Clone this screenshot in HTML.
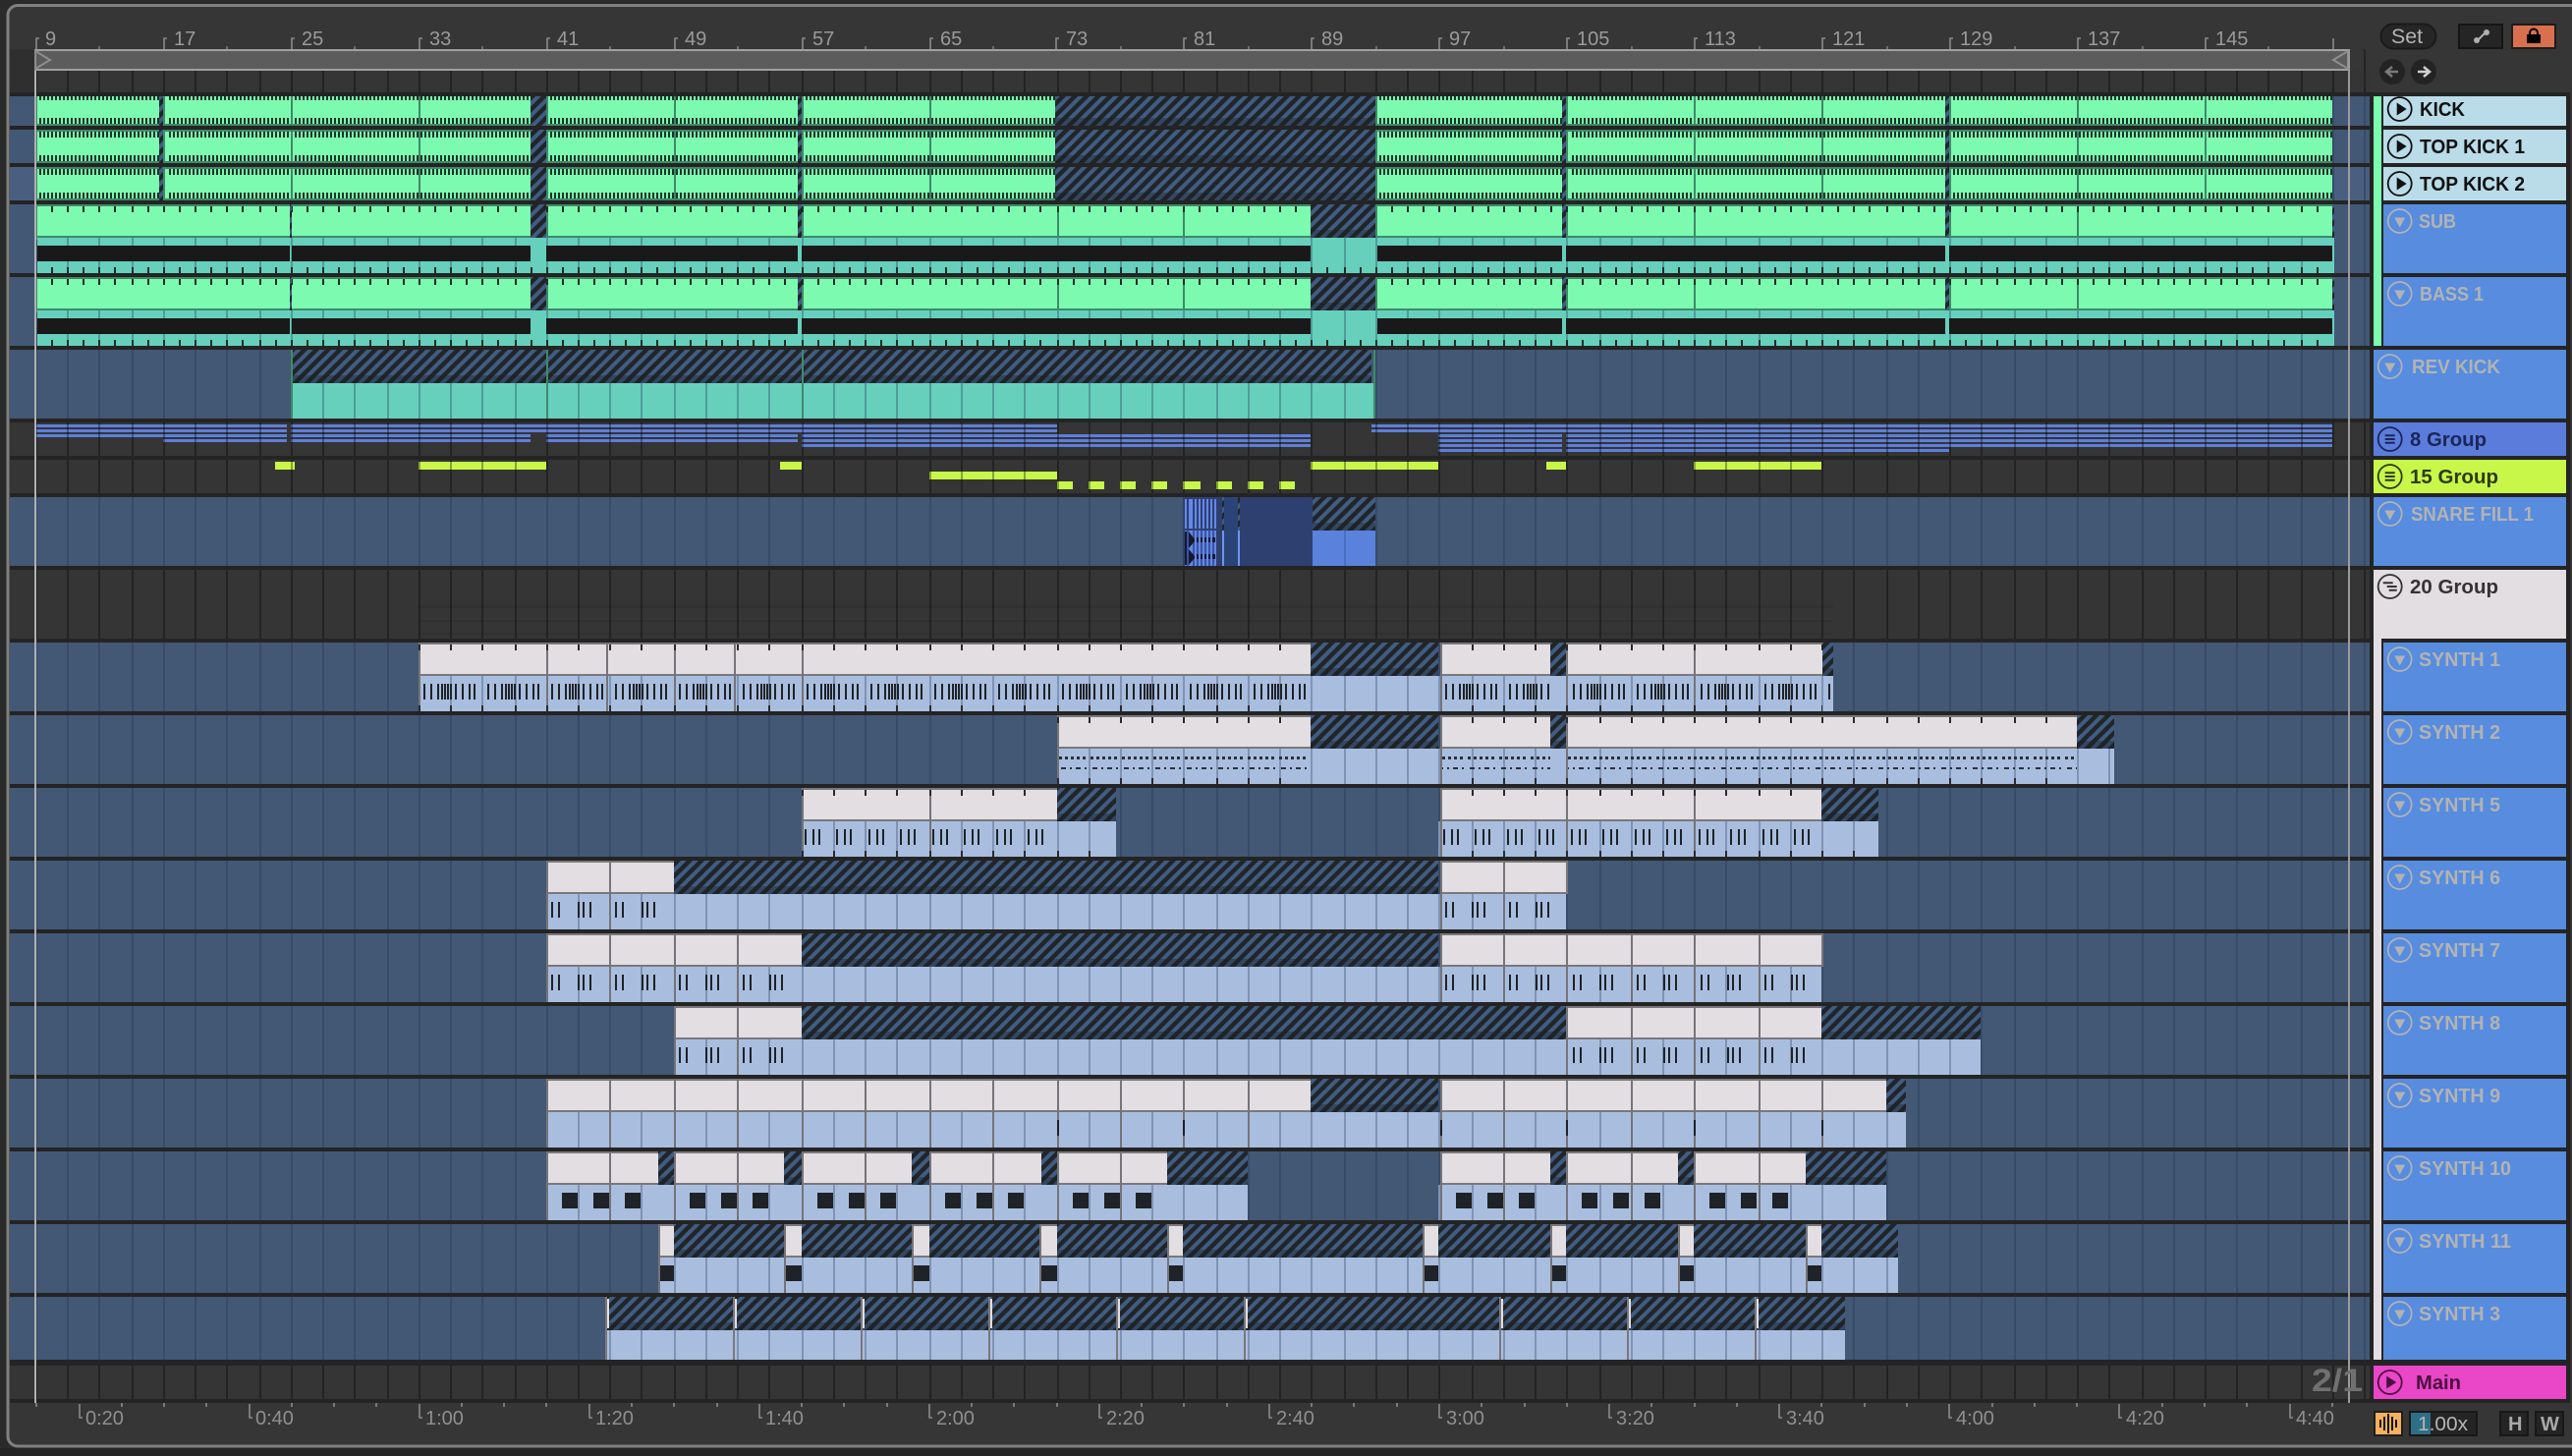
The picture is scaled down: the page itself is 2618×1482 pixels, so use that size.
<!DOCTYPE html>
<html><head><meta charset="utf-8"><title>Arrangement</title>
<style>
html,body{margin:0;padding:0;background:#2a2a2a;width:2618px;height:1482px;overflow:hidden}
svg{display:block}
text{font-family:"Liberation Sans",sans-serif}
.r{font-size:20px;fill:#9a9a9a}
.b{font-size:20px;fill:#8f8f8f}
.l{font-size:20px;font-weight:700}
.o{fill:#b3b3b3}
</style></head><body>
<svg xmlns="http://www.w3.org/2000/svg" width="2618" height="1482" viewBox="0 0 2618 1482">
<defs>
<pattern id="h" width="12" height="12" patternUnits="userSpaceOnUse"><rect width="12" height="12" fill="#20252a"/><path d="M-3 3L3 -3M0 12L12 0M9 15L15 9" stroke="#415c80" stroke-width="4"/></pattern>
<pattern id="p4" width="4" height="10" patternUnits="userSpaceOnUse"><rect width="2" height="10" fill="#1a3328"/></pattern>
<pattern id="n1" x="426" width="65" height="100" patternUnits="userSpaceOnUse"><path fill="#1f2226" d="M5 0h2v100h-2zM12 0h2v100h-2zM19 0h2v100h-2zM23 0h2v100h-2zM26 0h2v100h-2zM29 0h2v100h-2zM32 0h2v100h-2zM37 0h2v100h-2zM44 0h2v100h-2zM51 0h2v100h-2zM56 0h2v100h-2z"/></pattern>
<pattern id="n5" x="816" width="65" height="100" patternUnits="userSpaceOnUse"><path fill="#1f2226" d="M3 0h2v100h-2zM11 0h2v100h-2zM17 0h2v100h-2zM35 0h2v100h-2zM43 0h2v100h-2zM49 0h2v100h-2z"/></pattern>
<pattern id="n6" x="556" width="65" height="100" patternUnits="userSpaceOnUse"><path fill="#1f2226" d="M5 0h2v100h-2zM12 0h2v100h-2zM32 0h2v100h-2zM37 0h2v100h-2zM44 0h2v100h-2z"/></pattern>
<pattern id="n2" x="1076" y="770" width="32" height="16" patternUnits="userSpaceOnUse"><path fill="#2a3038" d="M2 0h3v3h-3zM8 0h3v3h-3zM14 0h3v3h-3zM20 0h3v3h-3zM26 0h3v3h-3zM4 11h5v2h-5zM13 11h2v2h-2zM19 11h5v2h-5zM28 11h2v2h-2z"/></pattern>

<path id="grid" d="M37 0V1482M69 0V1482M101 0V1482M135 0V1482M167 0V1482M199 0V1482M231 0V1482M265 0V1482M297 0V1482M329 0V1482M361 0V1482M395 0V1482M427 0V1482M459 0V1482M491 0V1482M525 0V1482M557 0V1482M589 0V1482M621 0V1482M653 0V1482M687 0V1482M719 0V1482M751 0V1482M783 0V1482M817 0V1482M849 0V1482M881 0V1482M913 0V1482M947 0V1482M979 0V1482M1011 0V1482M1043 0V1482M1077 0V1482M1109 0V1482M1141 0V1482M1173 0V1482M1205 0V1482M1239 0V1482M1271 0V1482M1303 0V1482M1335 0V1482M1369 0V1482M1401 0V1482M1433 0V1482M1465 0V1482M1499 0V1482M1531 0V1482M1563 0V1482M1595 0V1482M1629 0V1482M1661 0V1482M1693 0V1482M1725 0V1482M1757 0V1482M1791 0V1482M1823 0V1482M1855 0V1482M1887 0V1482M1921 0V1482M1953 0V1482M1985 0V1482M2017 0V1482M2051 0V1482M2083 0V1482M2115 0V1482M2147 0V1482M2181 0V1482M2213 0V1482M2245 0V1482M2277 0V1482M2309 0V1482M2343 0V1482M2375 0V1482M2407 0V1482" fill="none" stroke-width="2"/>
<path id="g2" d="M37 0V70M69 0V70M101 0V70M135 0V70M167 0V70M199 0V70M231 0V70M265 0V70M297 0V70M329 0V70M361 0V70M395 0V70M427 0V70M459 0V70M491 0V70M525 0V70M557 0V70M589 0V70M621 0V70M653 0V70M687 0V70M719 0V70M751 0V70M783 0V70M817 0V70M849 0V70M881 0V70M913 0V70M947 0V70M979 0V70M1011 0V70M1043 0V70M1077 0V70M1109 0V70M1141 0V70M1173 0V70M1205 0V70M1239 0V70M1271 0V70M1303 0V70M1335 0V70M1369 0V70M1401 0V70M1433 0V70M1465 0V70M1499 0V70M1531 0V70M1563 0V70M1595 0V70M1629 0V70M1661 0V70M1693 0V70M1725 0V70M1757 0V70M1791 0V70M1823 0V70M1855 0V70M1887 0V70M1921 0V70M1953 0V70M1985 0V70M2017 0V70M2051 0V70M2083 0V70M2115 0V70M2147 0V70M2181 0V70M2213 0V70M2245 0V70M2277 0V70M2309 0V70M2343 0V70" fill="none" stroke-width="2"/>

<path id="rb" d="M10 98H2412V128H10ZM10 132H2412V166H10ZM10 170H2412V204H10ZM10 208H2412V278H10ZM10 282H2412V352H10ZM10 356H2412V426H10ZM10 506H2412V576H10ZM10 654H2412V724H10ZM10 728H2412V798H10ZM10 802H2412V872H10ZM10 876H2412V946H10ZM10 950H2412V1020H10ZM10 1024H2412V1094H10ZM10 1098H2412V1168H10ZM10 1172H2412V1242H10ZM10 1246H2412V1316H10ZM10 1320H2412V1384H10Z"/>
<path id="rd" d="M36 71H2412V94H36ZM10 430H2412V464H10ZM10 468H2412V502H10ZM10 580H2412V650H10ZM10 1390H2412V1424H10Z"/>
<path id="lo" d="M426 688H1866V724H426ZM1076 762H2152V798H1076ZM816 836H1136V872H816ZM1464 836H1912V872H1464ZM556 910H1594V946H556ZM556 984H1854V1020H556ZM686 1058H2016V1094H686ZM556 1132H1940V1168H556ZM556 1206H1270V1242H556ZM1464 1206H1920V1242H1464ZM670 1280H1932V1316H670ZM616 1354H1878V1384H616Z"/>
<path id="tl" d="M296 390H1398V426H296Z"/>
<path id="tb" d="M38 34H2376V70H38Z"/>
<path id="sn" d="M1336 540H1400V576H1336Z"/>
<path id="hp" d="M296 356H1396V390H296ZM1336 506H1400V540H1336ZM1334 654H1464V688H1334ZM1578 654H1594V688H1578ZM1855 654H1866V688H1855ZM1334 728H1464V762H1334ZM1578 728H1594V762H1578ZM2114 728H2152V762H2114ZM1076 802H1136V836H1076ZM1854 802H1912V836H1854ZM686 876H1464V910H686ZM816 950H1464V984H816ZM816 1024H1594V1058H816ZM1854 1024H2016V1058H1854ZM1334 1098H1464V1132H1334ZM1920 1098H1940V1132H1920ZM670 1172H686V1206H670ZM798 1172H816V1206H798ZM928 1172H946V1206H928ZM1060 1172H1076V1206H1060ZM1188 1172H1270V1206H1188ZM1578 1172H1594V1206H1578ZM1708 1172H1724V1206H1708ZM1838 1172H1920V1206H1838ZM686 1246H798V1280H686ZM816 1246H928V1280H816ZM946 1246H1058V1280H946ZM1076 1246H1188V1280H1076ZM1204 1246H1448V1280H1204ZM1464 1246H1578V1280H1464ZM1594 1246H1708V1280H1594ZM1724 1246H1838V1280H1724ZM1854 1246H1932V1280H1854ZM616 1320H1878V1354H616Z"/>

<clipPath id="crb"><use href="#rb"/></clipPath>
<clipPath id="crd"><use href="#rd"/></clipPath>
<clipPath id="clo"><use href="#lo"/></clipPath>
<clipPath id="ctl"><use href="#tl"/></clipPath>
<clipPath id="ctb"><use href="#tb"/></clipPath>
<clipPath id="csn"><use href="#sn"/></clipPath>
<clipPath id="chp"><use href="#hp"/></clipPath>
<clipPath id="ctk"><path d="M426 656H1334V662H426ZM426 718H1334V724H426ZM1466 656H1578V662H1466ZM1466 718H1578V724H1466ZM1594 656H1855V662H1594ZM1594 718H1855V724H1594ZM1076 730H1334V736H1076ZM1076 792H1334V798H1076ZM1466 730H1578V736H1466ZM1466 792H1578V798H1466ZM1594 730H2114V736H1594ZM1594 792H2114V798H1594ZM816 804H1076V810H816ZM816 866H1136V872H816ZM1466 804H1854V810H1466ZM1466 866H1912V872H1466Z"/></clipPath>
<clipPath id="cbt"><path d="M38 2H295V8H38ZM297 2H540V8H297ZM556 2H812V8H556ZM816 2H1334V8H816ZM1402 2H1590V8H1402ZM1594 2H1980V8H1594ZM1984 2H2374V8H1984ZM38 64H2374V70H38Z"/></clipPath>

<g id="kr">
<path fill="#3f8a68" d="M36 0H162V34H36ZM166 0H540V34H166ZM556 0H812V34H556ZM816 0H1074V34H816ZM1400 0H1590V34H1400ZM1594 0H1980V34H1594ZM1984 0H2374V34H1984Z"/>
<path fill="#7cfbb0" d="M38 2H162V32H38ZM168 2H540V32H168ZM558 2H812V32H558ZM818 2H1074V32H818ZM1402 2H1590V32H1402ZM1596 2H1980V32H1596ZM1986 2H2374V32H1986Z"/>
<path fill="url(#p4)" d="M40 2H162V8H40ZM170 2H540V8H170ZM560 2H812V8H560ZM820 2H1074V8H820ZM1404 2H1590V8H1404ZM1598 2H1980V8H1598ZM1988 2H2374V8H1988ZM40 26H162V32H40ZM170 26H540V32H170ZM560 26H812V32H560ZM820 26H1074V32H820ZM1404 26H1590V32H1404ZM1598 26H1980V32H1598ZM1988 26H2374V32H1988Z"/>
<path fill="url(#h)" d="M162 0H166V34H162ZM540 0H556V34H540ZM812 0H816V34H812ZM1074 0H1400V34H1074ZM1590 0H1594V34H1590ZM1980 0H1984V34H1980Z"/>
<rect x="1074" y="26" width="326" height="8" fill="#1c2026" fill-opacity=".35"/>
<path stroke="#3f8a68" stroke-width="2" d="M297 0V34M427 0V34M687 0V34M947 0V34M1725 0V34M1855 0V34M2115 0V34M2245 0V34"/>
</g>

<g id="br">
<path fill="#3f8a68" d="M36 0H295V36H36ZM297 0H540V36H297ZM556 0H812V36H556ZM816 0H1334V36H816ZM1400 0H1590V36H1400ZM1594 0H1980V36H1594ZM1984 0H2374V36H1984Z"/>
<path fill="#7cfbb0" d="M38 2H295V32H38ZM297 2H540V32H297ZM558 2H812V32H558ZM818 2H1334V32H818ZM1402 2H1590V32H1402ZM1596 2H1980V32H1596ZM1986 2H2374V32H1986Z"/>
<use href="#tb" fill="#66d0bc"/>
<g clip-path="url(#ctb)"><use href="#g2" stroke="#4f9d9a"/></g>
<path fill="#191919" d="M38 42H295V58H38ZM297 42H540V58H297ZM556 42H812V58H556ZM816 42H1334V58H816ZM1402 42H1590V58H1402ZM1594 42H1980V58H1594ZM1984 42H2374V58H1984Z"/>
<path fill="url(#h)" d="M295 0H297V34H295ZM540 0H556V34H540ZM812 0H816V34H812ZM1334 0H1400V34H1334ZM1590 0H1594V34H1590ZM1980 0H1984V34H1980ZM2374 0H2376V34H2374Z"/>
<rect x="1334" y="26" width="66" height="8" fill="#1c2026" fill-opacity=".35"/>
<path stroke="#3f8a68" stroke-width="2" d="M1077 0V34M1205 0V34M1725 0V34M2115 0V34"/>
<g clip-path="url(#cbt)" stroke="#1e2e26"><use href="#g2"/><use href="#g2" x="16"/></g>
</g>

<g id="ia"><circle r="12" fill="none" stroke="#b3b3b3" stroke-width="1.7"/><path d="M-5.5 -3.5H5.5L0 6.5Z" fill="#b3b3b3"/></g>
<g id="ip"><circle r="12" fill="none" stroke="#111" stroke-width="1.8"/><path d="M-3 -6.5L7 0L-3 6.5Z" fill="#111"/></g>
</defs>

<rect width="2618" height="1482" fill="#2a2a2a"/>
<path d="M2618 5.5H18a10 10 0 0 0 -10 10V1462a10 10 0 0 0 10 10H2618Z" fill="#363636"/>
<path d="M2618 5.5H18a10 10 0 0 0 -10 10V1462a10 10 0 0 0 10 10H2618" fill="none" stroke="#808080" stroke-width="3"/>
<rect y="1474" width="2618" height="8" fill="#242424"/>

<!-- track area -->
<rect x="10" y="94" width="2608" height="1334" fill="#242424"/>
<rect x="2616" y="94" width="2" height="1334" fill="#333"/>
<rect x="10" y="50" width="26" height="44" fill="#2f2f2f"/>
<use href="#rb" fill="#425875"/>
<rect x="10" y="170" width="2402" height="34" fill="#4a5f80"/>
<use href="#rd" fill="#353535"/>
<g clip-path="url(#crb)"><use href="#grid" stroke="#384b68"/></g>

<!-- 8 group lines -->
<path fill="none" stroke="#5d7fdb" stroke-width="3" d="M36 433.5H292M296 433.5H1076M1396 433.5H2374M36 438.5H292M296 438.5H1076M1396 438.5H2374M36 443.5H292M296 443.5H540M556 443.5H812M816 443.5H1334M1464 443.5H1590M1594 443.5H2374M166 448.5H292M296 448.5H540M556 448.5H812M816 448.5H1334M1464 448.5H1590M1594 448.5H2374M816 453.5H1334M1464 453.5H1590M1594 453.5H2374M1464 458.5H1590M1594 458.5H1984"/>
<!-- 15 group bars -->
<path fill="#c8f74a" d="M280 470H300V478H280ZM426 470H556V478H426ZM794 470H816V478H794ZM946 480H1076V488H946ZM1076 490H1092V498H1076ZM1108 490H1124V498H1108ZM1140 490H1156V498H1140ZM1172 490H1188V498H1172ZM1204 490H1222V498H1204ZM1238 490H1254V498H1238ZM1270 490H1286V498H1270ZM1302 490H1318V498H1302ZM1334 470H1464V478H1334ZM1574 470H1594V478H1574ZM1724 470H1854V478H1724Z"/>
<!-- faint group 20 lines -->
<path fill="#000" fill-opacity=".07" d="M426 616H1866V619H426ZM426 631H1866V633H426ZM426 644H1866V646H426Z"/>
<g clip-path="url(#crd)"><use href="#grid" stroke="#000" stroke-opacity=".33"/></g>

<!-- lower clip bodies -->
<use href="#lo" fill="#a9bedf"/>
<g clip-path="url(#clo)"><use href="#grid" stroke="#7f93b5"/></g>
<use href="#tl" fill="#66d0bc"/>
<g clip-path="url(#ctl)"><use href="#grid" stroke="#4f9d9a"/></g>
<use href="#sn" fill="#5a82dc"/>
<g clip-path="url(#csn)"><use href="#grid" stroke="#4a6fc0"/></g>

<!-- kick rows -->
<use href="#kr" transform="translate(0,94)"/>
<rect x="10" y="94" width="2402" height="4" fill="#242424"/>
<use href="#kr" transform="translate(0,132)"/>
<use href="#kr" transform="translate(0,170)"/>
<use href="#br" transform="translate(0,208)"/>
<use href="#br" transform="translate(0,282)"/>

<!-- rev kick -->
<rect x="1398" y="356" width="2" height="70" fill="#3f8a68"/>

<!-- snare fill -->
<rect x="1204" y="506" width="132" height="70" fill="#2e4070"/>
<rect x="1246" y="506" width="14" height="70" fill="#2b4478"/>
<path fill="#6488e8" d="M1206 508h2v30h-2zM1210 508h4v30h-4zM1216 508h2v30h-2zM1220 508h2v30h-2zM1224 508h2v30h-2zM1228 508h2v30h-2zM1232 508h2v30h-2zM1236 508h2v30h-2z"/>
<path fill="#6488e8" d="M1206 540h2v36h-2zM1210 540h4v36h-4zM1216 540h2v36h-2zM1220 540h2v36h-2zM1224 540h2v36h-2zM1228 540h2v36h-2zM1232 540h2v36h-2zM1236 540h2v36h-2z"/>
<path fill="#3a53a0" d="M1208 540h2v36h-2zM1214 540h2v36h-2zM1218 540h2v36h-2zM1222 540h2v36h-2zM1226 540h2v36h-2zM1230 540h2v36h-2zM1234 540h2v36h-2z"/>
<path fill="#141a2c" d="M1206 541h2v34h-2zM1210 541l6 8v2l-6 7zM1210 559l6 7v2l-6 7zM1218 547h2v5h-2zM1222 547h2v5h-2zM1226 547h2v5h-2zM1230 547h2v5h-2zM1234 547h3v5h-3zM1218 564h2v5h-2zM1222 564h2v5h-2zM1226 564h2v5h-2zM1230 564h2v5h-2zM1234 564h3v5h-3z"/>
<path fill="#6f93ee" d="M1244 540h2v36h-2zM1260 540h2v36h-2z"/>
<path fill="url(#h)" d="M1244 506h2v34h-2zM1260 506h2v34h-2z"/>

<!-- notes in lower -->
<g>
<path fill="url(#n1)" d="M426 696H1334V712H426ZM1466 696H1578V712H1466ZM1594 696H1866V712H1594Z"/>
<path fill="url(#n2)" d="M1076 770H1334V786H1076ZM1466 770H1578V786H1466ZM1594 770H2114V786H1594Z"/>
<path fill="url(#n5)" d="M816 844H1076V860H816ZM1466 844H1854V860H1466Z"/>
<path fill="url(#n6)" d="M556 918H686V934H556ZM1466 918H1594V934H1466ZM556 992H816V1008H556ZM1466 992H1854V1008H1466ZM686 1066H816V1082H686ZM1594 1066H1854V1082H1594Z"/>
<path fill="#1f2226" d="M572 1214h16v16h-16zM604 1214h16v16h-16zM636 1214h16v16h-16zM702 1214h16v16h-16zM734 1214h16v16h-16zM766 1214h16v16h-16zM832 1214h16v16h-16zM864 1214h16v16h-16zM896 1214h16v16h-16zM962 1214h16v16h-16zM994 1214h16v16h-16zM1026 1214h16v16h-16zM1092 1214h16v16h-16zM1124 1214h16v16h-16zM1156 1214h16v16h-16zM1482 1214h16v16h-16zM1514 1214h16v16h-16zM1546 1214h16v16h-16zM1610 1214h16v16h-16zM1642 1214h16v16h-16zM1674 1214h16v16h-16zM1740 1214h16v16h-16zM1772 1214h16v16h-16zM1804 1214h16v16h-16zM672 1288h14v16h-14zM800 1288h16v16h-16zM930 1288h16v16h-16zM1060 1288h16v16h-16zM1190 1288h14v16h-14zM1450 1288h14v16h-14zM1580 1288h14v16h-14zM1710 1288h14v16h-14zM1840 1288h14v16h-14z"/>
</g>

<!-- beige upper -->
<path fill="#e3dee2" stroke="#7a787b" stroke-width="2" d="M427 655H1335V687H427ZM1467 655H1579V687H1467ZM1595 655H1856V687H1595ZM1077 729H1335V761H1077ZM1467 729H1579V761H1467ZM1595 729H2115V761H1595ZM817 803H1077V835H817ZM1467 803H1855V835H1467ZM557 877H687V909H557ZM1467 877H1595V909H1467ZM557 951H817V983H557ZM1467 951H1855V983H1467ZM687 1025H817V1057H687ZM1595 1025H1855V1057H1595ZM557 1099H1335V1131H557ZM1467 1099H1921V1131H1467ZM557 1173H671V1205H557ZM687 1173H799V1205H687ZM817 1173H929V1205H817ZM947 1173H1061V1205H947ZM1077 1173H1189V1205H1077ZM1467 1173H1579V1205H1467ZM1595 1173H1709V1205H1595ZM1725 1173H1839V1205H1725ZM671 1247H687V1279H671ZM799 1247H817V1279H799ZM929 1247H947V1279H929ZM1059 1247H1077V1279H1059ZM1189 1247H1205V1279H1189ZM1449 1247H1465V1279H1449ZM1579 1247H1595V1279H1579ZM1709 1247H1725V1279H1709ZM1839 1247H1855V1279H1839Z"/>
<!-- hatch -->
<use href="#hp" fill="url(#h)"/>
<g clip-path="url(#chp)"><path fill="#1c2026" fill-opacity=".35" d="M0 382H2618V390H0ZM0 532H2618V540H0ZM0 680H2618V688H0ZM0 754H2618V762H0ZM0 828H2618V836H0ZM0 902H2618V910H0ZM0 976H2618V984H0ZM0 1050H2618V1058H0ZM0 1124H2618V1132H0ZM0 1198H2618V1206H0ZM0 1272H2618V1280H0ZM0 1346H2618V1354H0Z"/></g>
<path stroke="#3f8a68" stroke-width="2" d="M297 356V426M557 356V426M817 356V426"/>
<!-- thin stubs synth 3 -->
<path fill="#7a787b" d="M616 1320h2v64h-2zM746 1320h2v64h-2zM876 1320h2v64h-2zM1006 1320h2v64h-2zM1136 1320h2v64h-2zM1266 1320h2v64h-2zM1526 1320h2v64h-2zM1656 1320h2v64h-2zM1786 1320h2v64h-2z"/>
<path fill="#e3dee2" d="M618 1322h2v30h-2zM748 1322h2v30h-2zM878 1322h2v30h-2zM1008 1322h2v30h-2zM1138 1322h2v30h-2zM1268 1322h2v30h-2zM1528 1322h2v30h-2zM1658 1322h2v30h-2zM1788 1322h2v30h-2z"/>
<!-- clip boundary lines -->
<path stroke="#757479" stroke-width="2" fill="none" d="M427 654V724M557 654V724M618 654V724M687 654V724M748 654V724M817 654V724M1467 654V724M1595 654V724M1725 654V724M1077 728V798M1467 728V798M1595 728V798M817 802V872M947 802V872M1467 802V872M1595 802V872M1725 802V872M557 876V946M621 876V946M1467 876V946M1531 876V946M557 950V1020M621 950V1020M687 950V1020M751 950V1020M1467 950V1020M1531 950V1020M1595 950V1020M1661 950V1020M1725 950V1020M1791 950V1020M687 1024V1094M751 1024V1094M1595 1024V1094M1661 1024V1094M1725 1024V1094M1791 1024V1094M557 1098V1168M621 1098V1168M687 1098V1168M751 1098V1168M817 1098V1168M881 1098V1168M947 1098V1168M1011 1098V1168M1077 1098V1168M1141 1098V1168M1205 1098V1168M1271 1098V1168M1467 1098V1168M1531 1098V1168M1595 1098V1168M1661 1098V1168M1725 1098V1168M1791 1098V1168M1855 1098V1168M557 1172V1242M621 1172V1242M687 1172V1242M751 1172V1242M817 1172V1242M881 1172V1242M947 1172V1242M1011 1172V1242M1077 1172V1242M1141 1172V1242M1467 1172V1242M1531 1172V1242M1595 1172V1242M1661 1172V1242M1725 1172V1242M1791 1172V1242M671 1246V1316M799 1246V1316M929 1246V1316M1059 1246V1316M1189 1246V1316M1449 1246V1316M1579 1246V1316M1709 1246V1316M1839 1246V1316"/>
<path fill="#1f2226" d="M1076 1140h2v16h-2zM1204 1140h2v16h-2zM1466 1140h2v16h-2zM1594 1140h2v16h-2zM1724 1140h2v16h-2zM1854 1140h2v16h-2z"/>
<g clip-path="url(#ctk)"><use href="#grid" stroke="#2a2a2e"/></g>

<!-- loop brace -->
<rect x="35" y="50" width="2357" height="22" fill="#5c5c5c"/>
<rect x="35" y="50" width="2357" height="2" fill="#a0a0a0"/>
<rect x="35" y="70" width="2357" height="2" fill="#a0a0a0"/>
<path d="M36 52L51 61L36 70Z" fill="none" stroke="#8d8d8d" stroke-width="2"/>
<path d="M2390 52L2375 61L2390 70Z" fill="none" stroke="#8d8d8d" stroke-width="2"/>
<rect x="35" y="72" width="2" height="1356" fill="#b0b0b0"/>
<rect x="2390" y="50" width="2" height="1378" fill="#9b9b9b"/>
<rect x="2406" y="50" width="2" height="44" fill="#242424"/>

<!-- top ruler -->
<path fill="none" stroke="#8c8c8c" stroke-width="1.6" d="M37 50V39h3M167 50V39h3M297 50V39h3M427 50V39h3M557 50V39h3M687 50V39h3M817 50V39h3M947 50V39h3M1075 50V39h3M1205 50V39h3M1335 50V39h3M1465 50V39h3M1595 50V39h3M1725 50V39h3M1855 50V39h3M1985 50V39h3M2115 50V39h3M2245 50V39h3M2375 50V39"/>
<path fill="none" stroke="#7a7a7a" stroke-width="1.6" d="M101 50V47M231 50V47M361 50V47M491 50V47M621 50V47M751 50V47M881 50V47M1011 50V47M1141 50V47M1271 50V47M1401 50V47M1531 50V47M1661 50V47M1791 50V47M1921 50V47M2051 50V47M2181 50V47M2309 50V47"/>
<text class="r" x="46" y="46">9</text><text class="r" x="177" y="46">17</text><text class="r" x="307" y="46">25</text><text class="r" x="437" y="46">33</text><text class="r" x="567" y="46">41</text><text class="r" x="697" y="46">49</text><text class="r" x="827" y="46">57</text><text class="r" x="957" y="46">65</text><text class="r" x="1085" y="46">73</text><text class="r" x="1215" y="46">81</text><text class="r" x="1345" y="46">89</text><text class="r" x="1475" y="46">97</text><text class="r" x="1605" y="46">105</text><text class="r" x="1735" y="46">113</text><text class="r" x="1865" y="46">121</text><text class="r" x="1995" y="46">129</text><text class="r" x="2125" y="46">137</text><text class="r" x="2255" y="46">145</text>

<!-- bottom ruler -->
<path fill="none" stroke="#8a8a8a" stroke-width="1.6" d="M81 1429v14h3M254 1429v14h3M427 1429v14h3M600 1429v14h3M773 1429v14h3M946 1429v14h3M1119 1429v14h3M1292 1429v14h3M1465 1429v14h3M1638 1429v14h3M1811 1429v14h3M1984 1429v14h3M2157 1429v14h3M2331 1429v14h3"/>
<path fill="none" stroke="#8a8a8a" stroke-width="1.6" d="M37 1428v4M124 1428v4M167 1428v4M210 1428v4M297 1428v4M340 1428v4M383 1428v4M470 1428v4M513 1428v4M556 1428v4M643 1428v4M686 1428v4M730 1428v4M816 1428v4M859 1428v4M903 1428v4M989 1428v4M1032 1428v4M1076 1428v4M1162 1428v4M1205 1428v4M1249 1428v4M1335 1428v4M1378 1428v4M1422 1428v4M1508 1428v4M1552 1428v4M1595 1428v4M1681 1428v4M1725 1428v4M1768 1428v4M1854 1428v4M1898 1428v4M1941 1428v4M2028 1428v4M2071 1428v4M2114 1428v4M2201 1428v4M2244 1428v4M2287 1428v4M2374 1428v4"/>
<text class="b" x="87" y="1450">0:20</text><text class="b" x="260" y="1450">0:40</text><text class="b" x="433" y="1450">1:00</text><text class="b" x="606" y="1450">1:20</text><text class="b" x="779" y="1450">1:40</text><text class="b" x="953" y="1450">2:00</text><text class="b" x="1126" y="1450">2:20</text><text class="b" x="1299" y="1450">2:40</text><text class="b" x="1472" y="1450">3:00</text><text class="b" x="1645" y="1450">3:20</text><text class="b" x="1818" y="1450">3:40</text><text class="b" x="1991" y="1450">4:00</text><text class="b" x="2164" y="1450">4:20</text><text class="b" x="2337" y="1450">4:40</text>

<text x="2353" y="1416" font-size="32" font-weight="700" fill="#707070" textLength="52" lengthAdjust="spacingAndGlyphs">2/1</text>

<!-- top right controls -->
<rect x="2423.5" y="24.5" width="56" height="25" rx="12.5" fill="#262626" stroke="#1a1a1a" stroke-width="2"/>
<text x="2434" y="44" font-size="21" fill="#b4b4b4" textLength="32" lengthAdjust="spacingAndGlyphs">Set</text>
<rect x="2503" y="25" width="44" height="24" fill="#252525" stroke="#151515" stroke-width="2"/>
<path d="M2522 41L2530 33" stroke="#b0b0b0" stroke-width="2"/><circle cx="2521" cy="41" r="3" fill="#b0b0b0"/><circle cx="2531" cy="33" r="3" fill="#b0b0b0"/>
<rect x="2557" y="25" width="44" height="24" fill="#d8704e" stroke="#1c1c1c" stroke-width="2"/>
<rect x="2572" y="35" width="14" height="9" fill="#000"/><path d="M2575 35.5v-2a4 4 0 0 1 8 0v2" fill="none" stroke="#000" stroke-width="2"/>
<circle cx="2435" cy="73" r="13" fill="#232323"/><path d="M2441 73H2431M2435 68L2429 73L2435 78" fill="none" stroke="#7a7a7a" stroke-width="2.5"/>
<circle cx="2467" cy="73" r="13" fill="#232323"/><path d="M2461 73H2471M2467 68L2473 73L2467 78" fill="none" stroke="#cfcfcf" stroke-width="2.5"/>

<!-- track labels -->
<rect x="2416" y="98" width="8" height="254" fill="#7cfbb0"/>
<path fill="#b9dce8" d="M2426 98H2612V128H2426ZM2426 132H2612V166H2426ZM2426 170H2612V204H2426Z"/>
<path fill="#578cdf" d="M2426 208H2612V278H2426ZM2426 282H2612V352H2426ZM2416 356H2612V426H2416ZM2416 506H2612V576H2416ZM2426 654H2612V724H2426ZM2426 728H2612V798H2426ZM2426 802H2612V872H2426ZM2426 876H2612V946H2426ZM2426 950H2612V1020H2426ZM2426 1024H2612V1094H2426ZM2426 1098H2612V1168H2426ZM2426 1172H2612V1242H2426ZM2426 1246H2612V1316H2426ZM2426 1320H2612V1384H2426Z"/>
<rect x="2416" y="430" width="196" height="34" fill="#5c7cdc"/>
<rect x="2416" y="468" width="196" height="34" fill="#c8f74a"/>
<rect x="2416" y="580" width="196" height="70" fill="#e3dee2"/>
<rect x="2416" y="650" width="8" height="734" fill="#e3dee2"/>
<rect x="2424" y="650" width="2" height="734" fill="#242424"/>
<rect x="2424" y="650" width="188" height="4" fill="#242424"/>
<rect x="2416" y="1390" width="196" height="34" fill="#ea46c8"/>

<use href="#ip" transform="translate(2442.7,111)"/>
<use href="#ip" transform="translate(2442.7,149)"/>
<use href="#ip" transform="translate(2442.7,187)"/>
<use href="#ia" transform="translate(2442.7,225)"/>
<use href="#ia" transform="translate(2442.7,299)"/>
<use href="#ia" transform="translate(2432.7,373)"/>
<use href="#ia" transform="translate(2432.7,523)"/>
<use href="#ia" transform="translate(2442.7,671)"/>
<use href="#ia" transform="translate(2442.7,745)"/>
<use href="#ia" transform="translate(2442.7,819)"/>
<use href="#ia" transform="translate(2442.7,893)"/>
<use href="#ia" transform="translate(2442.7,967)"/>
<use href="#ia" transform="translate(2442.7,1041)"/>
<use href="#ia" transform="translate(2442.7,1115)"/>
<use href="#ia" transform="translate(2442.7,1189)"/>
<use href="#ia" transform="translate(2442.7,1263)"/>
<use href="#ia" transform="translate(2442.7,1337)"/>

<g transform="translate(2432.7,447)" fill="none" stroke="#1a2657" stroke-width="1.8"><circle r="12"/><path stroke-width="2" d="M-5 -3.7H5M-5 0H5M-5 3.7H5"/></g>
<g transform="translate(2432.7,485)" fill="none" stroke="#2d3a10" stroke-width="1.8"><circle r="12"/><path stroke-width="2" d="M-5 -3.7H5M-5 0H5M-5 3.7H5"/></g>
<g transform="translate(2432.7,597)" fill="none" stroke="#333" stroke-width="1.8"><circle r="12"/><path stroke-width="2" d="M-7 -3.7H3M-3 0H7M-1 3.7H7"/></g>
<g transform="translate(2432.7,1407)"><circle r="12" fill="none" stroke="#4a1040" stroke-width="1.8"/><path d="M-3.5 -6.5L6.5 0L-3.5 6.5Z" fill="#4a1040"/></g>

<text class="l" x="2463" y="118" fill="#111" textLength="46" lengthAdjust="spacingAndGlyphs">KICK</text>
<text class="l" x="2463" y="156" fill="#111" textLength="107" lengthAdjust="spacingAndGlyphs">TOP KICK 1</text>
<text class="l" x="2463" y="194" fill="#111" textLength="107" lengthAdjust="spacingAndGlyphs">TOP KICK 2</text>
<text class="l o" x="2462" y="232" textLength="38" lengthAdjust="spacingAndGlyphs">SUB</text>
<text class="l o" x="2463" y="306" textLength="65" lengthAdjust="spacingAndGlyphs">BASS 1</text>
<text class="l o" x="2455" y="380" textLength="90" lengthAdjust="spacingAndGlyphs">REV KICK</text>
<text class="l" x="2453" y="454" fill="#1a2657" textLength="78" lengthAdjust="spacingAndGlyphs">8 Group</text>
<text class="l" x="2453" y="492" fill="#2d3a10" textLength="90" lengthAdjust="spacingAndGlyphs">15 Group</text>
<text class="l o" x="2454" y="530" textLength="125" lengthAdjust="spacingAndGlyphs">SNARE FILL 1</text>
<text class="l" x="2453" y="604" fill="#333" textLength="90" lengthAdjust="spacingAndGlyphs">20 Group</text>
<text class="l o" x="2462" y="678" textLength="83" lengthAdjust="spacingAndGlyphs">SYNTH 1</text>
<text class="l o" x="2462" y="752" textLength="83" lengthAdjust="spacingAndGlyphs">SYNTH 2</text>
<text class="l o" x="2462" y="826" textLength="83" lengthAdjust="spacingAndGlyphs">SYNTH 5</text>
<text class="l o" x="2462" y="900" textLength="83" lengthAdjust="spacingAndGlyphs">SYNTH 6</text>
<text class="l o" x="2462" y="974" textLength="83" lengthAdjust="spacingAndGlyphs">SYNTH 7</text>
<text class="l o" x="2462" y="1048" textLength="83" lengthAdjust="spacingAndGlyphs">SYNTH 8</text>
<text class="l o" x="2462" y="1122" textLength="83" lengthAdjust="spacingAndGlyphs">SYNTH 9</text>
<text class="l o" x="2462" y="1196" textLength="94" lengthAdjust="spacingAndGlyphs">SYNTH 10</text>
<text class="l o" x="2462" y="1270" textLength="94" lengthAdjust="spacingAndGlyphs">SYNTH 11</text>
<text class="l o" x="2462" y="1344" textLength="83" lengthAdjust="spacingAndGlyphs">SYNTH 3</text>
<text class="l" x="2459" y="1414" fill="#4a1040" textLength="46" lengthAdjust="spacingAndGlyphs">Main</text>

<!-- bottom right controls -->
<rect x="2417" y="1437" width="28" height="24" fill="#f5b060" stroke="#1e1e1e" stroke-width="2"/>
<path stroke="#111" stroke-width="2" d="M2423 1445v8M2427 1442v14M2431 1439v20M2435 1442v14M2439 1445v8"/>
<rect x="2453" y="1437" width="68" height="24" fill="#242424" stroke="#181818" stroke-width="2"/>
<rect x="2454" y="1438" width="20" height="22" fill="#2f6f85"/>
<text x="2461" y="1456" font-size="20" fill="#b5b5b5" textLength="51" lengthAdjust="spacingAndGlyphs">1.00x</text>
<rect x="2545" y="1437" width="28" height="24" fill="#242424" stroke="#181818" stroke-width="2"/>
<text x="2553" y="1456" font-size="20" font-weight="700" fill="#a8a8a8">H</text>
<rect x="2581" y="1437" width="28" height="24" fill="#242424" stroke="#181818" stroke-width="2"/>
<text x="2586" y="1456" font-size="20" font-weight="700" fill="#a8a8a8">W</text>
</svg>
</body></html>
